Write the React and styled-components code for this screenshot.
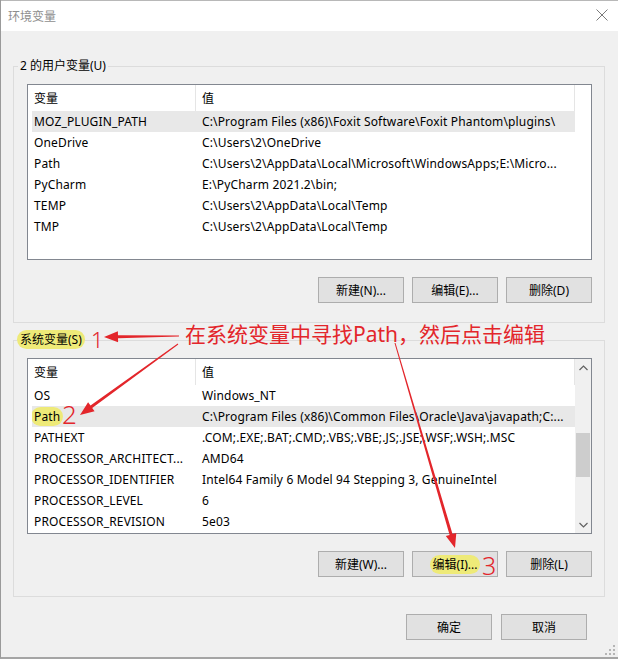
import React from "react";
import styled, { createGlobalStyle } from "styled-components";

const userVars = [
  ["MOZ_PLUGIN_PATH", "C:\\Program Files (x86)\\Foxit Software\\Foxit Phantom\\plugins\\"],
  ["OneDrive", "C:\\Users\\2\\OneDrive"],
  ["Path", "C:\\Users\\2\\AppData\\Local\\Microsoft\\WindowsApps;E:\\Micro..."],
  ["PyCharm", "E:\\PyCharm 2021.2\\bin;"],
  ["TEMP", "C:\\Users\\2\\AppData\\Local\\Temp"],
  ["TMP", "C:\\Users\\2\\AppData\\Local\\Temp"],
];

const systemVars = [
  ["OS", "Windows_NT"],
  ["Path", "C:\\Program Files (x86)\\Common Files\\Oracle\\Java\\javapath;C:..."],
  ["PATHEXT", ".COM;.EXE;.BAT;.CMD;.VBS;.VBE;.JS;.JSE;.WSF;.WSH;.MSC"],
  ["PROCESSOR_ARCHITECT...", "AMD64"],
  ["PROCESSOR_IDENTIFIER", "Intel64 Family 6 Model 94 Stepping 3, GenuineIntel"],
  ["PROCESSOR_LEVEL", "6"],
  ["PROCESSOR_REVISION", "5e03"],
];

// tapered arrow like a marker stroke: thin at the tail, thick near the head
function arrowPoints(x1, y1, x2, y2) {
  const dx = x2 - x1;
  const dy = y2 - y1;
  const len = Math.hypot(dx, dy);
  const ux = dx / len;
  const uy = dy / len;
  const px = -uy;
  const py = ux;
  const head = 14;
  const bx = x2 - ux * head;
  const by = y2 - uy * head;
  const pts = [
    [x1 + px * 0.5, y1 + py * 0.5],
    [bx + px * 1.5, by + py * 1.5],
    [bx + px * 5.5, by + py * 5.5],
    [x2, y2],
    [bx - px * 5.5, by - py * 5.5],
    [bx - px * 1.5, by - py * 1.5],
    [x1 - px * 0.5, y1 - py * 0.5],
  ];
  return pts.map((p) => p.map((v) => v.toFixed(1)).join(",")).join(" ");
}

export default function App() {
  return (
    <>
      <GlobalStyle />
      <Window>
        <TitleBar>
          <Title>环境变量</Title>
          <svg width="12" height="12" viewBox="0 0 12 12">
            <path d="M0.5 0.5 L11.5 11.5 M11.5 0.5 L0.5 11.5" stroke="#7a7a7a" strokeWidth="1" />
          </svg>
        </TitleBar>
        <Body>
          <Group>
            <Legend>2 的用户变量(U)</Legend>
            <VarList rows={userVars} selected={0} />
            <ButtonRow>
              <Button>新建(N)...</Button>
              <Button>编辑(E)...</Button>
              <Button>删除(D)</Button>
            </ButtonRow>
          </Group>
          <Group $gap>
            <Legend>
              <Mark>系统变量(S)</Mark>
            </Legend>
            <VarList rows={systemVars} selected={1} markRow={1} scroll />
            <ButtonRow>
              <Button>新建(W)...</Button>
              <Button>
                <Mark>编辑(I)...</Mark>
              </Button>
              <Button>删除(L)</Button>
            </ButtonRow>
          </Group>
          <DialogButtons>
            <Button>确定</Button>
            <Button>取消</Button>
          </DialogButtons>
        </Body>

        <Overlay width="618" height="659" viewBox="0 0 618 659">
          <polygon points={arrowPoints(179, 336, 104, 337)} fill="#e3262b" />
          <polygon points={arrowPoints(178, 344, 80, 415)} fill="#e3262b" />
          <polygon points={arrowPoints(395, 343, 455, 548)} fill="#e3262b" />
        </Overlay>
        <Note $x={185} $y={322} $size={21}>在系统变量中寻找Path，然后点击编辑</Note>
        <Note $x={91} $y={326} $size={22} $thin>1</Note>
        <Note $x={62} $y={399} $size={26} $thin>2</Note>
        <Note $x={482} $y={550} $size={25} $thin>3</Note>
        <Grip width="10" height="10" viewBox="0 0 10 10">
          <rect x="8" y="0" width="2" height="2" fill="#b5b5b5" />
          <rect x="4" y="4" width="2" height="2" fill="#b5b5b5" />
          <rect x="8" y="4" width="2" height="2" fill="#b5b5b5" />
          <rect x="0" y="8" width="2" height="2" fill="#b5b5b5" />
          <rect x="4" y="8" width="2" height="2" fill="#b5b5b5" />
          <rect x="8" y="8" width="2" height="2" fill="#b5b5b5" />
        </Grip>
      </Window>
    </>
  );
}

function VarList({ rows, selected, markRow, scroll }) {
  return (
    <List>
      <Pane>
        <Header>
          <HeaderCell>变量</HeaderCell>
          <HeaderCell>值</HeaderCell>
        </Header>
        <Rows>
          {rows.map(([name, value], i) => (
            <Row key={name} $selected={i === selected}>
              <Cell>{i === markRow ? <Mark>{name}</Mark> : name}</Cell>
              <Cell>{value}</Cell>
            </Row>
          ))}
        </Rows>
      </Pane>
      {scroll ? (
        <ScrollBar>
          <ScrollArrow>
            <svg width="9" height="6" viewBox="0 0 9 6">
              <path d="M0.5 5 L4.5 1 L8.5 5" stroke="#606060" strokeWidth="1.2" fill="none" />
            </svg>
          </ScrollArrow>
          <Track>
            <Thumb />
          </Track>
          <ScrollArrow>
            <svg width="9" height="6" viewBox="0 0 9 6">
              <path d="M0.5 1 L4.5 5 L8.5 1" stroke="#606060" strokeWidth="1.2" fill="none" />
            </svg>
          </ScrollArrow>
        </ScrollBar>
      ) : (
        <Filler />
      )}
    </List>
  );
}

const GlobalStyle = createGlobalStyle`
  html, body {
    margin: 0;
    padding: 0;
    background: #f0f0f0;
  }
  body {
    font-family: "Noto Sans", "Noto Sans CJK SC", sans-serif;
    font-size: 12px;
    color: #000;
  }
`;

const Window = styled.div`
  position: relative;
  width: 618px;
  height: 659px;
  box-sizing: border-box;
  border-left: 1px solid #9a9a9a;
  border-bottom: 2px solid #a5a5a5;
  background: #f0f0f0;
  display: flex;
  flex-direction: column;
  overflow: hidden;
`;

const TitleBar = styled.div`
  height: 31px;
  flex: none;
  background: #fff;
  display: flex;
  align-items: center;
  justify-content: space-between;
  padding: 0 10px 2px 7px;
  border-top: 1px solid #b8b8b8;
  box-sizing: border-box;
`;

const Title = styled.div`
  font-family: "Noto Sans CJK SC", sans-serif;
  font-size: 12px;
  color: #8e8e8e;
`;

const Body = styled.div`
  flex: 1;
  display: flex;
  flex-direction: column;
  padding: 27px 13px 0 12px;
`;

const Group = styled.fieldset`
  margin: ${(p) => (p.$gap ? "9px" : "0")} 0 0 0;
  border: 1px solid #dcdcdc;
  padding: 10px 12px 19px 13px;
  min-width: 0;
`;

const Legend = styled.legend`
  padding: 0 2px;
  margin-left: -9px;
  line-height: 16px;
  font-family: "Noto Sans", "Noto Sans CJK SC", sans-serif;
  font-size: 12px;
`;

const Mark = styled.span`
  background: #eeea78;
  border-radius: 10px;
  padding: 1px 3px;
  margin: 0 -3px;
`;

const List = styled.div`
  height: 176px;
  box-sizing: border-box;
  border: 1px solid #828790;
  background: #fff;
  display: flex;
`;

const Pane = styled.div`
  width: 547px;
  flex: none;
  display: flex;
  flex-direction: column;
  overflow: hidden;
`;

const Header = styled.div`
  height: 26px;
  flex: none;
  display: grid;
  grid-template-columns: 168px 1fr;
`;

const HeaderCell = styled.div`
  padding-left: 6px;
  line-height: 26px;
  border-right: 1px solid #e5e5e5;
  font-family: "Noto Sans CJK SC", sans-serif;
`;

const Rows = styled.div`
  padding-left: 4px;
  display: flex;
  flex-direction: column;
`;

const Row = styled.div`
  height: 21px;
  display: grid;
  grid-template-columns: 168px 1fr;
  background: ${(p) => (p.$selected ? "#e8e8e8" : "transparent")};
`;

const Cell = styled.div`
  padding-left: 2px;
  line-height: 21px;
  letter-spacing: 0.15px;
  white-space: nowrap;
  overflow: hidden;
`;

const Filler = styled.div`
  flex: 1;
`;

const ScrollBar = styled.div`
  flex: 1;
  background: #f0f0f0;
  display: flex;
  flex-direction: column;
`;

const ScrollArrow = styled.div`
  height: 17px;
  flex: none;
  display: flex;
  align-items: center;
  justify-content: center;
`;

const Track = styled.div`
  flex: 1;
  padding: 57px 1px 0;
`;

const Thumb = styled.div`
  height: 44px;
  background: #cdcdcd;
`;

const ButtonRow = styled.div`
  display: flex;
  justify-content: flex-end;
  gap: 8px;
  margin-top: 17px;
`;

const Button = styled.button`
  width: 86px;
  height: 26px;
  box-sizing: border-box;
  border: 1px solid #adadad;
  background: #e1e1e1;
  font-family: "Noto Sans", "Noto Sans CJK SC", sans-serif;
  font-size: 12px;
  color: #000;
  padding: 0;
`;

const DialogButtons = styled.div`
  display: flex;
  justify-content: flex-end;
  gap: 9px;
  margin: 17px 18px 0 0;
`;

const Overlay = styled.svg`
  position: absolute;
  left: -1px;
  top: 0;
  pointer-events: none;
`;

const Note = styled.div`
  position: absolute;
  left: ${(p) => p.$x - 1}px;
  top: ${(p) => p.$y}px;
  font-family: "Noto Sans", "Noto Sans CJK SC", sans-serif;
  font-size: ${(p) => p.$size}px;
  font-weight: ${(p) => (p.$thin ? 300 : 400)};
  line-height: 1.2;
  color: #e3262b;
  white-space: nowrap;
`;

const Grip = styled.svg`
  position: absolute;
  right: 3px;
  bottom: 2px;
`;
